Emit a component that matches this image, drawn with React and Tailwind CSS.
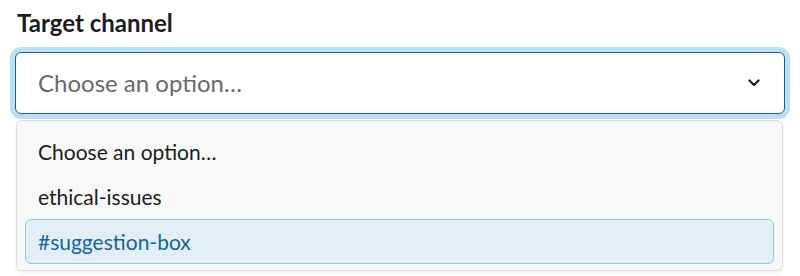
export default function App() {
  return (
    <div className="w-[800px] h-[276px] bg-white overflow-hidden" style={{ fontFamily: 'Lato, "Noto Sans", sans-serif' }}>
      <div className="pl-[17px] pt-[8px] pr-[16px]">
        <div className="text-[24px] leading-[30px] font-bold text-[#1d1c1d]">Target channel</div>
        <div className="mt-[14px] ml-[-2px] mr-[-1px] h-[62px] rounded-[6px] border border-[#1264a3] bg-white shadow-[0_0_0_5px_#bde0f1] flex items-center justify-between pl-[22px] pr-[24px]">
          <span className="text-[24px] text-[#696969]">Choose an option…</span>
          <svg width="12" height="8" viewBox="0 0 12 8" fill="none">
            <path d="M1.5 1.5 L6 6 L10.5 1.5" stroke="#1d1c1d" strokeWidth="2.2" strokeLinecap="round" strokeLinejoin="round" />
          </svg>
        </div>
        <div className="mt-[6px] ml-[-1px] mr-[1px] rounded-[6px] border border-[#dddddd] bg-[#f8f8f8] shadow-[0_2px_4px_rgba(0,0,0,0.06)] pt-[8px] pb-[6px] px-[8px] text-[21px] text-[#1d1c1d]">
          <div className="h-[45px] flex items-center pl-[13px]">Choose an option…</div>
          <div className="h-[45px] flex items-center pl-[13px]">ethical-issues</div>
          <div className="h-[45px] flex items-center pl-[12px] rounded-[6px] border border-[#8cc8e4] bg-[#e3eff6] text-[#1264a3]">#suggestion-box</div>
        </div>
      </div>
    </div>
  );
}
